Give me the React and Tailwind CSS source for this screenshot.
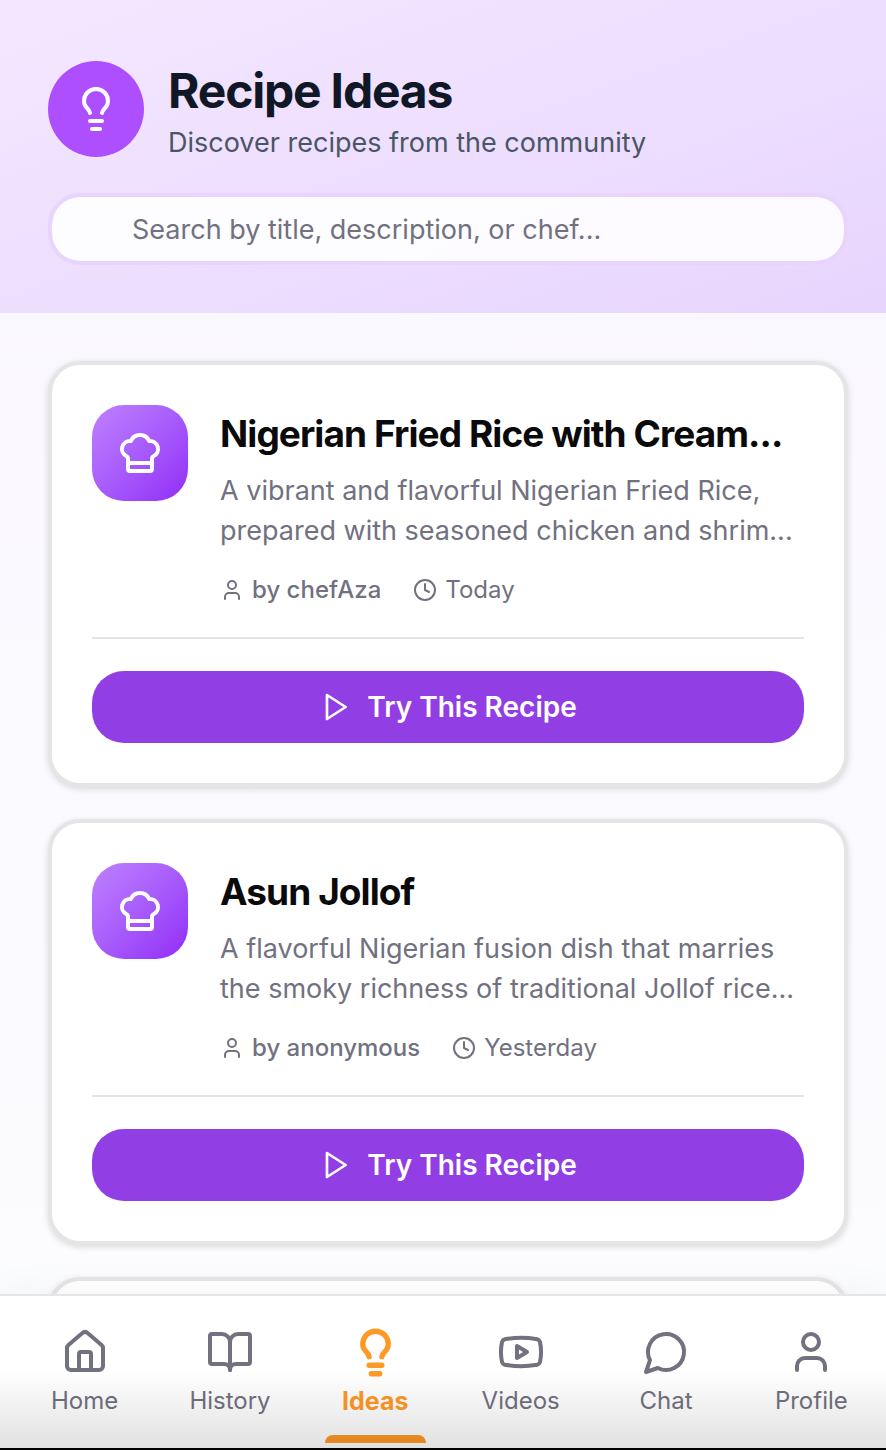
import { useState } from 'react'
import { BookOpen, ChefHat, Clock, House, Lightbulb, User, Youtube } from 'lucide-react'

const recipes = [
  {
    id: 1,
    title: 'Nigerian Fried Rice with Cream...',
    description: 'A vibrant and flavorful Nigerian Fried Rice, prepared with seasoned chicken and shrim...',
    chef: 'chefAza',
    date: 'Today'
  },
  {
    id: 2,
    title: 'Asun Jollof',
    description: 'A flavorful Nigerian fusion dish that marries the smoky richness of traditional Jollof rice...',
    chef: 'anonymous',
    date: 'Yesterday'
  }
]

const tabs = [
  { label: 'Home', icon: House },
  { label: 'History', icon: BookOpen },
  { label: 'Ideas', icon: Lightbulb },
  { label: 'Videos', icon: Youtube },
  { label: 'Chat', icon: ChatIcon },
  { label: 'Profile', icon: User }
]

function App() {
  const [search, setSearch] = useState('')
  const [activeTab, setActiveTab] = useState('Ideas')

  const query = search.trim().toLowerCase()
  const visible = recipes.filter(r =>
    `${r.title} ${r.description} ${r.chef}`.toLowerCase().includes(query)
  )

  return (
    <div className="relative flex h-screen flex-col overflow-hidden bg-linear-to-b from-[#f9f6fe] to-[#fcfdff] font-['Inter',sans-serif] text-neutral-950">
      <Header search={search} onSearch={setSearch} />

      <main className="flex min-h-0 flex-1 flex-col gap-8 overflow-y-auto pt-12 pr-[38px] pl-12 [scrollbar-width:none]">
        {visible.map(recipe => (
          <RecipeCard key={recipe.id} recipe={recipe} />
        ))}
        <div className="h-96 shrink-0 rounded-[32px] border-4 border-neutral-200 bg-white shadow-[0_2px_6px_rgba(0,0,0,0.14)]" />
      </main>

      <BottomNav activeTab={activeTab} onChange={setActiveTab} />

      {/* Shade along the bottom edge */}
      <div className="pointer-events-none absolute inset-x-0 bottom-0 z-20 h-20 bg-linear-to-b from-transparent to-black/12" />
      <div className="z-20 h-[2px] shrink-0 bg-black" />
    </div>
  )
}

function Header({ search, onSearch }) {
  return (
    <header className="bg-linear-to-br from-purple-100 to-[#e8d5fe] pt-[61px] pr-[38px] pb-12 pl-12">
      <div className="flex items-start gap-6">
        <div className="flex size-24 items-center justify-center rounded-full bg-[#ad4fff] text-white">
          <Lightbulb className="size-12" />
        </div>
        <div>
          <h1 className="text-[48px] leading-[60px] font-bold tracking-tight text-gray-900">Recipe Ideas</h1>
          <p className="text-[27px] leading-[44px] text-gray-600">Discover recipes from the community</p>
        </div>
      </div>
      <input
        type="search"
        aria-label="Search recipes"
        placeholder="Search by title, description, or chef..."
        value={search}
        onChange={(e) => onSearch(e.target.value)}
        className="mt-7 block h-[72px] w-full rounded-[32px] border-4 border-[#e8d5fe] bg-white/90 bg-clip-padding pr-8 pl-20 text-[27px] placeholder:text-[#71717f] focus:outline-none"
      />
    </header>
  )
}

function RecipeCard({ recipe }) {
  return (
    <article className="shrink-0 rounded-[32px] border-4 border-neutral-200 bg-white p-10 shadow-[0_2px_6px_rgba(0,0,0,0.14)]">
      <div className="flex gap-8">
        <div className="flex size-24 shrink-0 items-center justify-center rounded-[32px] bg-linear-to-br from-[#bf80ff] to-[#9227f6] text-white">
          <ChefHat className="size-12" />
        </div>
        <div className="min-w-0 flex-1">
          <h2 className="mb-2 truncate text-[37px] leading-[58px] font-bold tracking-tight">{recipe.title}</h2>
          <p className="text-[27px] leading-[40px] text-[#71717f]">{recipe.description}</p>
          <div className="mt-6 flex gap-8 text-[24px] leading-[30px] text-[#71717f]">
            <span className="flex items-center gap-2 font-medium">
              <User className="size-6" />
              by {recipe.chef}
            </span>
            <span className="flex items-center gap-2">
              <Clock className="size-6" />
              {recipe.date}
            </span>
          </div>
        </div>
      </div>
      <div className="mt-8 border-t-2 border-neutral-200 pt-8">
        <button className="flex h-[72px] w-full items-center justify-center gap-4 rounded-[32px] bg-[#913ee5] text-[28px] font-semibold text-white hover:bg-purple-700">
          <PlayIcon />
          Try This Recipe
        </button>
      </div>
    </article>
  )
}

function PlayIcon() {
  return (
    <svg className="size-8" viewBox="0 0 24 24" fill="none" stroke="currentColor" strokeWidth="2">
      <polygon points="6 3 20 12 6 21 6 3" strokeLinejoin="round" />
    </svg>
  )
}

function ChatIcon({ className, strokeWidth }) {
  return (
    <svg className={className} viewBox="0 0 24 24" fill="none" stroke="currentColor" strokeWidth={strokeWidth} strokeLinecap="round" strokeLinejoin="round">
      <path d="M7.9 20A9 9 0 1 0 4 16.1L2 22Z" />
    </svg>
  )
}

function BottomNav({ activeTab, onChange }) {
  return (
    <nav className="z-10 grid h-[154px] shrink-0 grid-cols-6 border-t-2 border-neutral-200 bg-white pr-[2px] pl-3 shadow-[0_-8px_32px_rgba(0,0,0,0.03)]">
      {tabs.map(({ label, icon: Icon }) => {
        const active = label === activeTab
        return (
          <button
            key={label}
            onClick={() => onChange(label)}
            className={`relative flex flex-col items-center pt-8 ${active ? 'font-bold text-[#ff9926]' : 'text-[#71717f]'}`}
          >
            <span className="flex size-12 items-center justify-center">
              <Icon className={active ? 'size-[51px] shrink-0' : 'size-12'} strokeWidth={active ? 2.5 : 2} />
            </span>
            <span className={`mt-2 leading-[34px] ${active ? 'text-[25px]' : 'text-[24px]'}`}>{label}</span>
            {active && <span className="absolute bottom-[5px] h-2 w-[101px] rounded-t-lg bg-[#ff9926]" />}
          </button>
        )
      })}
    </nav>
  )
}

export default App
